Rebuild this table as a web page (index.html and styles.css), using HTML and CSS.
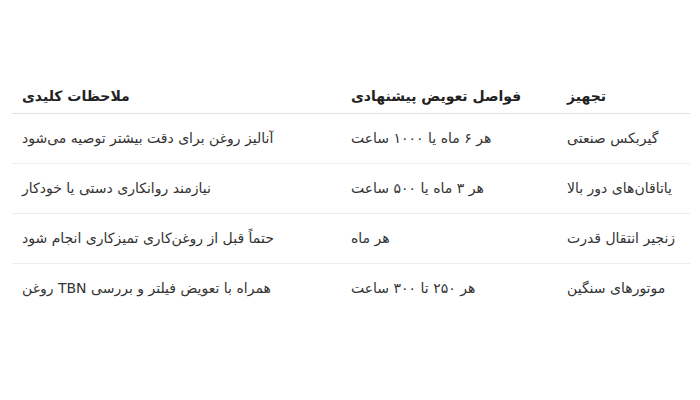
FILE: index.html
```html
<!DOCTYPE html>
<html lang="fa" dir="rtl">
<head>
<meta charset="utf-8">
<link rel="stylesheet" href="styles.css">
</head>
<body>
<div class="page">
<table class="tbl">
<thead>
<tr><th class="c1">تجهیز</th><th class="c2">فواصل تعویض پیشنهادی</th><th class="c3">ملاحظات کلیدی</th></tr>
</thead>
<tbody>
<tr><td>گیربکس صنعتی</td><td>هر ۶ ماه یا ۱۰۰۰ ساعت</td><td>آنالیز روغن برای دقت بیشتر توصیه می‌شود</td></tr>
<tr><td>یاتاقان‌های دور بالا</td><td>هر ۳ ماه یا ۵۰۰ ساعت</td><td>نیازمند روانکاری دستی یا خودکار</td></tr>
<tr><td>زنجیر انتقال قدرت</td><td>هر ماه</td><td>حتماً قبل از روغن‌کاری تمیزکاری انجام شود</td></tr>
<tr><td>موتورهای سنگین</td><td>هر ۲۵۰ تا ۳۰۰ ساعت</td><td>همراه با تعویض فیلتر و بررسی TBN روغن</td></tr>
</tbody>
</table>
</div>
</body>
</html>
```

FILE: styles.css
```css
html, body {
  margin: 0;
  padding: 0;
  background: #ffffff;
}
.page {
  padding: 80px 10px 0 12px;
  font-family: "DejaVu Sans", sans-serif;
  color: #333333;
}
.tbl {
  width: 678px;
  border-collapse: collapse;
  table-layout: fixed;
  font-size: 14px;
}
.tbl th,
.tbl td {
  box-sizing: border-box;
  text-align: left;
  padding: 0 10px;
  white-space: nowrap;
}
.c1 { width: 133px; }
.c2 { width: 216px; }
.c3 { width: 329px; }
.tbl th {
  height: 33px;
  font-weight: bold;
  color: #222222;
  border-bottom: 1px solid #e0e0e0;
}
.tbl td {
  height: 50px;
  border-bottom: 1px solid #ececec;
}
.tbl tbody tr:last-child td {
  border-bottom: none;
}
```
